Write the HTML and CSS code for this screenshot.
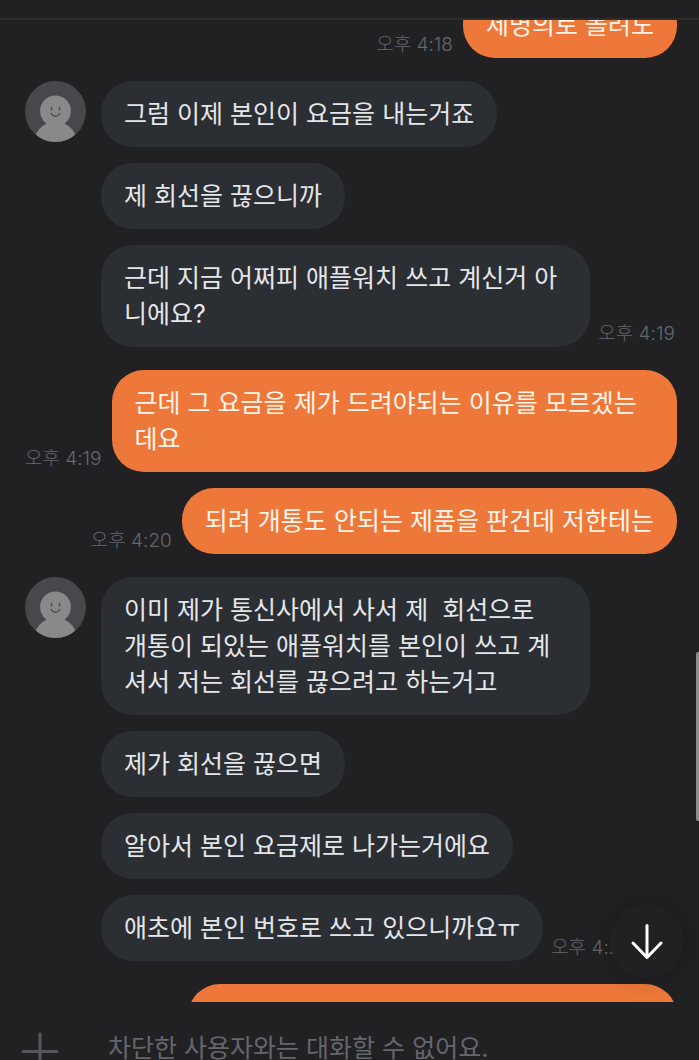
FILE: index.html
```html
<!DOCTYPE html>
<html lang="ko">

<head>
    <meta charset="utf-8">
    <meta name="viewport" content="width=device-width, initial-scale=1">
    <title>채팅</title>
    <link rel="stylesheet" href="styles.css">
</head>

<body>
    <svg class="defs" width="0" height="0" aria-hidden="true">
        <symbol id="avatar" viewBox="0 0 61 61">
            <clipPath id="round"><circle cx="30.5" cy="30.5" r="30.5" /></clipPath>
            <g clip-path="url(#round)">
                <rect width="61" height="61" fill="#47484c" />
                <circle cx="30.5" cy="30" r="15.4" fill="#88898b" />
                <path d="M21 40 Q22.500 42 20 43.500 Q14 46.500 10.500 54 V61 H50.500 V54 Q47 46.500 41 43.500 Q38.500 42 40 40 Z" fill="#88898b" />
            </g>
            <path d="M26.500 26.500 V29 M34.500 26.500 V29" stroke="#4b4c50" stroke-width="1.600" stroke-linecap="round" />
            <path d="M26 32.500 Q30.500 38 35 32.500" fill="none" stroke="#4b4c50" stroke-width="1.300" stroke-linecap="round" />
        </symbol>
    </svg>

    <header class="topbar"></header>

    <main class="chat">
        <div class="stream">
            <section class="group mine">
                <div class="row">
                    <time>오후 4:18</time>
                    <p class="bubble">제명의로 돌려도</p>
                </div>
            </section>

            <section class="group">
                <svg class="avatar" role="img" aria-label="프로필"><use href="#avatar" /></svg>
                <div class="messages">
                    <div class="row">
                        <p class="bubble">그럼 이제 본인이 요금을 내는거죠</p>
                    </div>
                    <div class="row">
                        <p class="bubble">제 회선을 끊으니까</p>
                    </div>
                    <div class="row">
                        <p class="bubble">근데 지금 어쩌피 애플워치 쓰고 계신거 아니에요?</p>
                        <time>오후 4:19</time>
                    </div>
                </div>
            </section>

            <section class="group mine">
                <div class="row">
                    <time>오후 4:19</time>
                    <p class="bubble">근데 그 요금을 제가 드려야되는 이유를 모르겠는데요</p>
                </div>
                <div class="row">
                    <time>오후 4:20</time>
                    <p class="bubble">되려 개통도 안되는 제품을 판건데 저한테는</p>
                </div>
            </section>

            <section class="group">
                <svg class="avatar" role="img" aria-label="프로필"><use href="#avatar" /></svg>
                <div class="messages">
                    <div class="row">
                        <p class="bubble">이미 제가 통신사에서 사서 제  회선으로<br>개통이 되있는 애플워치를 본인이 쓰고 계셔서 저는 회선를 끊으려고 하는거고</p>
                    </div>
                    <div class="row">
                        <p class="bubble">제가 회선을 끊으면</p>
                    </div>
                    <div class="row">
                        <p class="bubble">알아서 본인 요금제로 나가는거에요</p>
                    </div>
                    <div class="row">
                        <p class="bubble">애초에 본인 번호로 쓰고 있으니까요ㅠ</p>
                        <time>오후 4:20</time>
                    </div>
                </div>
            </section>

            <section class="group mine">
                <div class="row">
                    <p class="bubble wide"></p>
                </div>
            </section>
        </div>

        <div class="scrollbar"></div>
        <button class="to-bottom" type="button" aria-label="맨 아래로">
            <svg width="34" height="38" viewBox="0 0 34 38" fill="none" stroke="#fff" stroke-width="3" stroke-linecap="round" stroke-linejoin="round">
                <path d="M17 3.500 V35 M3 21 L17 35.500 L31 21" />
            </svg>
        </button>
    </main>

    <footer class="composer">
        <button class="add" type="button" aria-label="첨부">
            <svg width="38" height="38" viewBox="0 0 38 38" stroke="#55565d" stroke-width="3.200" stroke-linecap="round">
                <path d="M19 2 V36 M2 19.500 H36" />
            </svg>
        </button>
        <input class="field" type="text" aria-label="메시지" placeholder="차단한 사용자와는 대화할 수 없어요." disabled>
    </footer>
</body>

</html>
```

FILE: styles.css
```css
* {
    box-sizing: border-box;
}

body {
    display: flex;
    flex-direction: column;
    height: 100vh;
    margin: 0;
    overflow: hidden;
    background: #212123;
    color: #e4e6ea;
    font-family: Inter, "Noto Sans CJK KR", sans-serif;
    font-size: 25px;
    font-weight: 400;
    line-height: 36px;
}

button {
    display: flex;
    align-items: center;
    justify-content: center;
    padding: 0;
    border: 0;
    background: none;
}

.defs {
    position: absolute;
}

.topbar {
    flex: none;
    height: 20px;
    border-bottom: 2px solid #2d2d30;
}

/* conversation */
.chat {
    position: relative;
    flex: 1;
    min-height: 0;
    overflow: hidden;
}

/* scrolled part way down the history */
.stream {
    display: flex;
    flex-direction: column;
    gap: 23px;
    margin-top: -28px;
    padding: 0 22px 0 25px;
}

.group {
    display: flex;
    gap: 15px;
}

.messages,
.mine {
    display: flex;
    flex-direction: column;
    gap: 16px;
}

.messages {
    flex: 1;
}

.row {
    display: flex;
    align-items: flex-end;
    gap: 8px;
}

.mine .row {
    justify-content: flex-end;
    gap: 10px;
}

.avatar {
    flex: none;
    width: 61px;
    height: 61px;
}

.bubble {
    max-width: 70vw;
    min-height: 66px;
    margin: 0;
    padding: 15px 23px;
    border-radius: 32px;
    background: #2b2e33;
    white-space: pre-wrap;
}

.mine .bubble {
    max-width: none;
    background: #ed7839;
    color: #fff4ea;
}

.mine .wide {
    width: 70vw;
}

time {
    flex: none;
    color: #66676e;
    font-size: 19px;
    font-weight: 300;
    line-height: 26px;
}

/* floating parts */
.scrollbar {
    position: absolute;
    top: 632px;
    right: 0;
    width: 3px;
    height: 169px;
    border-radius: 2px 0 0 2px;
    background: #8c8c8c;
}

.to-bottom {
    position: absolute;
    right: 15px;
    bottom: 24px;
    width: 74px;
    height: 74px;
    border-radius: 50%;
    background: #212123;
    box-shadow: 0 0 28px rgba(0, 0, 0, .2);
}

/* message box */
.composer {
    display: flex;
    flex: none;
    align-items: flex-start;
    gap: 49px;
    height: 58px;
    padding: 28px 22px 0 21px;
    overflow: hidden;
}

.add {
    flex: none;
    height: 42px;
}

.field {
    flex: 1;
    height: 36px;
    padding: 0;
    border: 0;
    outline: 0;
    background: none;
    color: inherit;
    font: inherit;
}

.field::placeholder {
    color: #65666e;
    opacity: 1;
}
```
